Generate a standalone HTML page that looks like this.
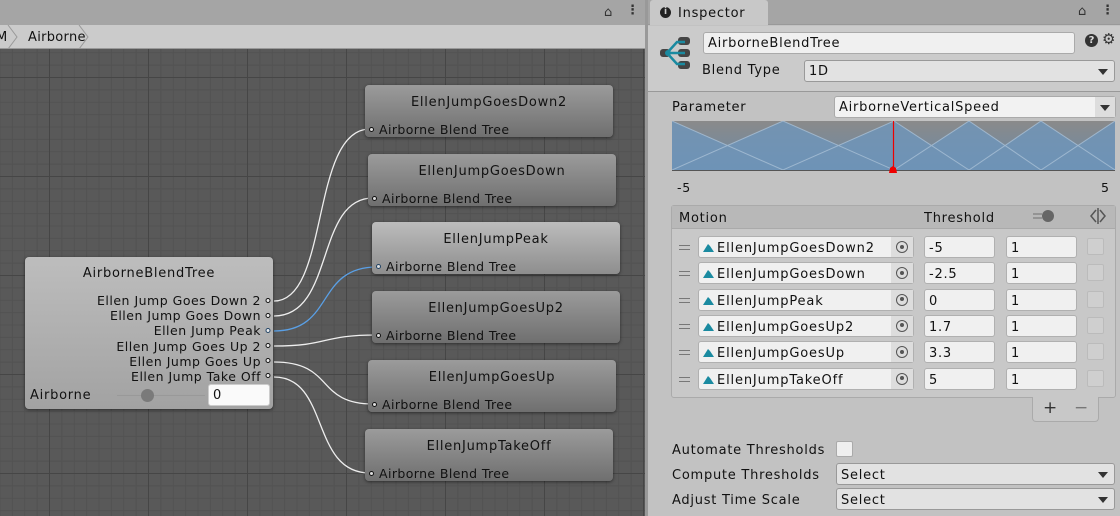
<!DOCTYPE html>
<html><head><style>
*{margin:0;padding:0;box-sizing:border-box}
body{width:1120px;height:516px;overflow:hidden;position:relative;font-family:"DejaVu Sans","Liberation Sans",sans-serif;font-size:13px;color:#111;background:#c2c2c2;letter-spacing:.75px}
.a{position:absolute}
.graph{left:0;top:49px;width:645px;height:467px;background-color:#595959;
background-image:linear-gradient(90deg,#464646 1px,transparent 1px),linear-gradient(#464646 1px,transparent 1px),linear-gradient(90deg,#525252 1px,transparent 1px),linear-gradient(#525252 1px,transparent 1px);
background-size:99px 99px,99px 99px,12.375px 12.375px,12.375px 12.375px;background-position:49px 28px,49px 28px,49px 28px,49px 28px}
.node{border-radius:4px;background:linear-gradient(#9b9b9b,#6f6f6f);box-shadow:0 1px 3px rgba(0,0,0,.5);width:248px;height:52px}
.node .t{position:absolute;top:10px;left:0;right:0;text-align:center;font-size:13px;color:#111}
.node .b{position:absolute;left:14px;top:37px;font-size:12.5px;letter-spacing:.4px}
.node .d{position:absolute;left:4px;top:42px;width:5px;height:5px;border:1px solid #111;border-radius:50%;background:#ddd}
.field{background:#f0f0f0;border:1px solid #aaa;border-radius:3px}
.dd{background:#e2e2e2;border:1px solid #999;border-radius:3px}
.tri{position:absolute;right:6px;top:8px;width:0;height:0;border-left:5px solid transparent;border-right:5px solid transparent;border-top:6px solid #333}
</style></head><body>
<div class="a" style="left:0;top:0;width:645px;height:25px;background:#a5a5a5"></div>
<div class="a" style="left:604px;top:5px;font-size:13px;color:#333">⌂</div>
<div class="a" style="left:626px;top:3px;font-size:13px;color:#333;font-weight:bold">⋮</div>
<div class="a" style="left:0;top:25px;width:645px;height:24px;background:#cbcbcb;border-bottom:1px solid #999"></div>
<div class="a" style="left:-4px;top:30px;font-size:13px">M</div>
<svg class="a" style="left:0;top:25px" width="120" height="24"><path d="M8 0 L17 12 L8 24" stroke="#999" fill="none"/><path d="M79 0 L88 12 L79 24" stroke="#999" fill="none"/></svg>
<div class="a" style="left:28px;top:30px;font-size:13px;letter-spacing:.3px">Airborne</div>
<div class="a graph"></div>
<div class="a" style="left:645px;top:0;width:3px;height:516px;background:#999"></div>
<svg class="a" style="left:0;top:0" width="645" height="516">
<g fill="none" stroke="#eee" stroke-width="1.3">
<path d="M274 301 C330 301,310 129,370 129"/>
<path d="M274 316 C335 316,315 198,373 198"/>
<path d="M274 346 C330 346,320 335,377 335"/>
<path d="M274 362 C335 362,315 404,373 404"/>
<path d="M274 377 C330 377,310 473,370 473"/>
</g>
<path d="M274 331 C335 331,315 267,377 267" fill="none" stroke="#5aa0e6" stroke-width="1.3"/>
</svg>
<div class="a node" style="left:365px;top:85px"><div class="t">EllenJumpGoesDown2</div><div class="d"></div><div class="b">Airborne Blend Tree</div></div>
<div class="a node" style="left:368px;top:154px"><div class="t">EllenJumpGoesDown</div><div class="d"></div><div class="b">Airborne Blend Tree</div></div>
<div class="a node" style="left:372px;top:222px;background:linear-gradient(#bcbcbc,#8e8e8e)"><div class="t">EllenJumpPeak</div><div class="d" style="border-color:#246"></div><div class="b">Airborne Blend Tree</div></div>
<div class="a node" style="left:372px;top:291px"><div class="t">EllenJumpGoesUp2</div><div class="d"></div><div class="b">Airborne Blend Tree</div></div>
<div class="a node" style="left:368px;top:360px"><div class="t">EllenJumpGoesUp</div><div class="d"></div><div class="b">Airborne Blend Tree</div></div>
<div class="a node" style="left:365px;top:429px"><div class="t">EllenJumpTakeOff</div><div class="d"></div><div class="b">Airborne Blend Tree</div></div>
<div class="a" style="left:25px;top:257px;width:248px;height:152px;border-radius:4px;background:linear-gradient(#bdbdbd,#a2a2a2);box-shadow:0 1px 3px rgba(0,0,0,.5)">
<div class="a" style="left:0;right:0;top:9px;text-align:center;font-size:13px">AirborneBlendTree</div>
<div class="a" style="right:12px;top:36px;text-align:right;font-size:12.5px;line-height:15.2px;white-space:nowrap;letter-spacing:.5px">Ellen Jump Goes Down 2<br>Ellen Jump Goes Down<br>Ellen Jump Peak<br>Ellen Jump Goes Up 2<br>Ellen Jump Goes Up<br>Ellen Jump Take Off</div>
<svg class="a" style="left:240px;top:40px" width="8" height="95"><g fill="#eee" stroke="#111"><circle cx="3" cy="3.5" r="2"/><circle cx="3" cy="18.5" r="2"/><circle cx="3" cy="33.5" r="2" stroke="#246"/><circle cx="3" cy="48.5" r="2"/><circle cx="3" cy="63.5" r="2"/><circle cx="3" cy="78.5" r="2"/></g></svg>
<div class="a" style="left:5px;top:131px;font-size:13px">Airborne</div>
<div class="a" style="left:92px;top:138px;width:88px;height:1px;background:#999"></div>
<div class="a" style="left:116px;top:132px;width:13px;height:13px;border-radius:50%;background:#7a7a7a"></div>
<div class="a field" style="left:183px;top:127px;width:62px;height:22px;background:#fafafa;border-color:#ccc"><span style="position:absolute;left:4px;top:3px;font-size:13px">0</span></div>
</div>
<div class="a" style="left:648px;top:0;width:472px;height:25px;background:#a5a5a5;border-bottom:1px solid #999"></div>
<div class="a" style="left:650px;top:0;width:118px;height:25px;background:#c8c8c8;border-radius:3px 3px 0 0"></div>
<div class="a" style="left:660px;top:7px;width:11px;height:11px;border-radius:50%;background:#222;color:#ccc;font-size:9px;text-align:center;line-height:11px;font-weight:bold;letter-spacing:0">i</div>
<div class="a" style="left:678px;top:6px;font-size:13px">Inspector</div>
<div class="a" style="left:1078px;top:4px;font-size:13px;color:#333">⌂</div>
<div class="a" style="left:1101px;top:3px;font-size:13px;color:#333;font-weight:bold">⋮</div>
<div class="a" style="left:648px;top:26px;width:472px;height:66px;background:#cbcbcb;border-bottom:1px solid #999"></div>
<svg class="a" style="left:659px;top:36px" width="34" height="34"><g fill="#444"><rect x="19" y="1" width="12" height="8" rx="3"/><rect x="19" y="13" width="12" height="8" rx="3"/><rect x="19" y="25" width="12" height="8" rx="3"/><rect x="1" y="13" width="10" height="8" rx="3"/></g><g stroke="#1a8aa0" stroke-width="2.5" fill="none"><path d="M8 17 L26 17 M8 17 L18 6 L26 6 M8 17 L18 28 L26 28"/></g><circle cx="9" cy="17" r="3" fill="#1a8aa0"/></svg>
<div class="a field" style="left:703px;top:32px;width:372px;height:22px"><span style="position:absolute;left:4px;top:3px;font-size:13px">AirborneBlendTree</span></div>
<div class="a" style="left:1085px;top:34px;width:13px;height:13px;border-radius:50%;background:#333;color:#ddd;font-size:10px;text-align:center;line-height:13px;font-weight:bold;letter-spacing:0">?</div>
<div class="a" style="left:1102px;top:30px;font-size:15px;color:#333">⚙</div>
<div class="a" style="left:702px;top:63px;font-size:13px">Blend Type</div>
<div class="a dd" style="left:804px;top:60px;width:311px;height:22px"><span style="position:absolute;left:4px;top:3px;font-size:13px">1D</span><div class="tri"></div></div>
<div class="a" style="left:672px;top:100px;font-size:13px">Parameter</div>
<div class="a field" style="left:834px;top:96px;width:282px;height:22px;background:#f2f2f2"><span style="position:absolute;left:4px;top:3px;font-size:13px">AirborneVerticalSpeed</span><div class="a" style="right:0;top:0;width:20px;height:20px;background:#ddd"></div><div class="tri" style="right:5px"></div></div>
<svg class="a" style="left:672px;top:121px" width="443" height="52">
<defs><linearGradient id="g" x1="0" y1="0" x2="0" y2="1"><stop offset="0" stop-color="#8a8a8a"/><stop offset="1" stop-color="#6a8aa8"/></linearGradient></defs>
<rect width="443" height="50" fill="url(#g)"/>
<g fill="#6f96bb" opacity=".8"><path d="M0 0 L111 49 L0 49Z"/><path d="M0 49 L111 0 L222 49Z"/><path d="M111 49 L222 0 L297 49Z"/><path d="M222 49 L297 0 L369 49Z"/><path d="M297 49 L369 0 L443 49Z"/><path d="M369 49 L443 0 L443 49Z"/></g>
<g stroke="#a9c0d6" stroke-width="1" fill="none" opacity=".8"><path d="M0 0 L111 49 L222 0 L297 49 L369 0 L443 49"/><path d="M0 49 L111 0 L222 49 L297 0 L369 49 L443 0"/></g>
<line x1="0" y1="49.5" x2="443" y2="49.5" stroke="#555"/>
<line x1="221.5" y1="0" x2="221.5" y2="49" stroke="#e00" stroke-width="1.2"/>
<path d="M217 52 L218 47 L221 45 L224 47 L225 52Z" fill="#e00"/>
</svg>
<div class="a" style="left:677px;top:180px;font-size:12.5px">-5</div>
<div class="a" style="left:1101px;top:180px;font-size:12.5px">5</div>
<div class="a" style="left:671px;top:205px;width:445px;height:193px;border:1px solid #aaa;border-radius:3px;background:#c8c8c8"></div>
<div class="a" style="left:672px;top:206px;width:443px;height:23px;background:#b8b8b8;border-bottom:1px solid #aaa"></div>
<div class="a" style="left:679px;top:211px;font-size:13px">Motion</div>
<div class="a" style="left:924px;top:211px;font-size:13px;width:72px;overflow:hidden;white-space:nowrap">Threshold</div>
<svg class="a" style="left:1032px;top:208px" width="24" height="16"><path d="M1 6 H10 M1 10 H10" stroke="#888" stroke-width="1.5"/><circle cx="16" cy="8" r="6" fill="#666"/></svg>
<svg class="a" style="left:1089px;top:207px" width="18" height="18"><path d="M9 1 V17 M7 3 L2 9 L7 15 M11 3 L16 9 L11 15" stroke="#555" stroke-width="1.5" fill="none"/></svg>
<div id="rows"></div>
<div class="a" style="left:1032px;top:397px;width:67px;height:25px;background:#c8c8c8;border:1px solid #aaa;border-top:none;border-radius:0 0 4px 4px"></div>
<div class="a" style="left:1043px;top:398px;font-size:17px;color:#333">+</div>
<div class="a" style="left:1074px;top:398px;font-size:17px;color:#777">−</div>
<div class="a" style="left:672px;top:443px;font-size:13px">Automate Thresholds</div>
<div class="a" style="left:836px;top:441px;width:17px;height:16px;background:#efefef;border:1px solid #aaa;border-radius:2px"></div>
<div class="a" style="left:672px;top:468px;font-size:13px">Compute Thresholds</div>
<div class="a dd" style="left:836px;top:463px;width:279px;height:22px"><span style="position:absolute;left:4px;top:4px;font-size:13px">Select</span><div class="tri"></div></div>
<div class="a" style="left:672px;top:493px;font-size:13px">Adjust Time Scale</div>
<div class="a dd" style="left:836px;top:488px;width:279px;height:22px"><span style="position:absolute;left:4px;top:4px;font-size:13px">Select</span><div class="tri"></div></div>
<script>
var d=[["EllenJumpGoesDown2","-5"],["EllenJumpGoesDown","-2.5"],["EllenJumpPeak","0"],["EllenJumpGoesUp2","1.7"],["EllenJumpGoesUp","3.3"],["EllenJumpTakeOff","5"]];
var h="";
d.forEach(function(r,i){var y=236+i*26.3;
h+='<div class="a" style="left:679px;top:'+(y+9)+'px;width:11px;height:5px;border-top:1px solid #777;border-bottom:1px solid #777"></div>';
h+='<div class="a field" style="left:698px;top:'+y+'px;width:216px;height:22px;border-color:#b0b0b0"><svg style="position:absolute;left:4px;top:6px" width="11" height="9"><path d="M0 9 L5 1 L7 3 L11 9Z" fill="#1a8aa0"/></svg><span style="position:absolute;left:18px;top:4px;font-size:13px;letter-spacing:.85px">'+r[0]+'</span><div style="position:absolute;right:0;top:0;width:22px;height:20px;background:#ddd"><div style="position:absolute;left:5px;top:4px;width:12px;height:12px;border:1.5px solid #555;border-radius:50%"><div style="position:absolute;left:2.5px;top:2.5px;width:4px;height:4px;background:#555;border-radius:50%"></div></div></div></div>';
h+='<div class="a field" style="left:924px;top:'+y+'px;width:71px;height:22px;border-color:#b0b0b0"><span style="position:absolute;left:4px;top:4px;font-size:13px">'+r[1]+'</span></div>';
h+='<div class="a field" style="left:1006px;top:'+y+'px;width:71px;height:22px;border-color:#b0b0b0"><span style="position:absolute;left:4px;top:4px;font-size:13px">1</span></div>';
h+='<div class="a" style="left:1087px;top:'+(y+2)+'px;width:17px;height:17px;background:#cfcfcf;border:1px solid #bbb;border-radius:2px"></div>';
});
document.getElementById("rows").outerHTML=h;
</script>
</body></html>
